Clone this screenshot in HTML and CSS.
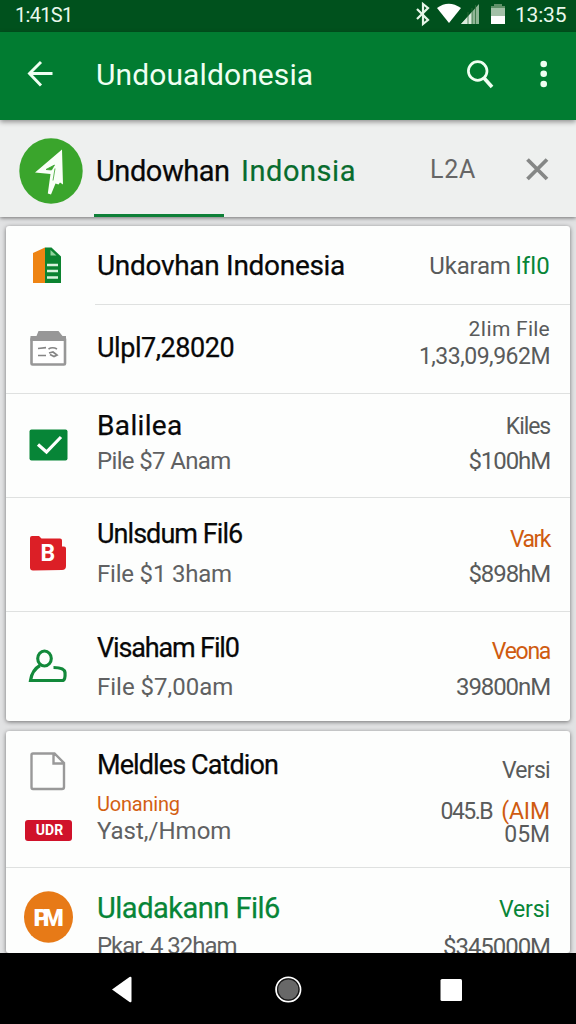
FILE: index.html
```html
<!DOCTYPE html>
<html lang="id">
<head>
<meta charset="utf-8">
<title>Undoualdonesia</title>
<link rel="stylesheet" href="styles.css">
</head>
<body>
<div class="screen">
  <div class="status">
    <span class="status-left">1:41S1</span>
    <svg viewBox="410 0 102 32" width="102" height="32">
      <path d="M417 9l11 11-5 4V4l5 4-11 11" fill="none" stroke="#e6f5e8" stroke-width="2.200"/>
      <path d="M437 8q11.500-8.500 24 0L449 23z" fill="#fff"/>
      <path d="M461 24L479 4V24z" fill="#8fb596"/>
      <path d="M461 24L472 12V24z" fill="#dcebde"/>
      <path d="M468 12v12M472 8v16M475.500 5v19" stroke="#2d6c3a" stroke-width=".8"/>
      <path d="M491 6h3V4h8v2h3v10h-14z" fill="#a3c0a7"/>
      <path d="M491 6h3V4h8v2h3v2h-14z" fill="#5f9068"/>
      <path d="M491 16h14v8h-14z" fill="#fff"/>
    </svg>
    <span class="status-clock">13:35</span>
  </div>
  <div class="appbar">
    <svg viewBox="0 32 96 88" width="96" height="88"><path d="M52.500 73.500H29.500M41 62L29.500 73.500 41 85.500" fill="none" stroke="#effff2" stroke-width="2.900"/></svg>
    <h1 class="appbar-title">Undoualdonesia</h1>
    <svg viewBox="456 32 120 88" width="120" height="88">
      <circle cx="477.700" cy="71" r="9.300" fill="none" stroke="#effff2" stroke-width="2.700"/>
      <path d="M484 78l8 9" stroke="#effff2" stroke-width="3.600"/>
      <g fill="#effff2"><circle cx="543.700" cy="64" r="3.300"/><circle cx="543.700" cy="73.700" r="3.300"/><circle cx="543.700" cy="84" r="3.300"/></g>
    </svg>
  </div>
  <div class="banner">
    <svg viewBox="0 120 94 97" width="94" height="97">
      <ellipse cx="51" cy="171" rx="31.700" ry="32.700" fill="#3aa52c"/>
      <path d="M62 149.500L35 172.500L50.500 174L47.800 193.500L51 194.500L55.500 183.500L58.500 184.500L60 182.500L63 184.500z" fill="#f9fff7"/>
      <path d="M46 169.500l8.500-4.500-3 5zM55 168.500l-2 12" fill="#3aa52c" stroke="#3aa52c" stroke-width=".8"/>
    </svg>
    <div class="banner-tab">Undowhan</div>
    <span class="banner-place">Indonsia</span>
    <span class="banner-code">L2A</span>
    <svg viewBox="520 120 56 97" width="56" height="97"><path d="M527.500 159.500l19.500 19.500M547 159.500L527.500 179" stroke="#858786" stroke-width="3.800"/></svg>
  </div>

  <div class="card">
    <div class="row r1">
      <svg viewBox="6 226 91 78" width="91" height="78">
        <path d="M33 253l12-5.500V283H33z" fill="#ee8413"/><path d="M45 247.500h6.500l9.500 9V283H45z" fill="#0b8330"/>
        <path d="M50.500 250l6 5.500h-6z" fill="#8fd39c"/><path d="M47 265h11M47 271h11M47 277.500h11" stroke="#d9f3dd" stroke-width="2.600"/>
      </svg>
      <div class="main"><span class="title">Undovhan Indonesia</span></div>
      <div class="side"><span class="meta lg">Ukaram<span class="green hl">lfl0</span></span></div>
    </div>
    <div class="row r2">
      <svg viewBox="6 305 91 88" width="91" height="88">
        <rect x="31.500" y="338" width="33.500" height="26.500" rx="1" fill="#fff" stroke="#979797" stroke-width="2.600"/>
        <path d="M30.500 336h6l2-5h20l4 5h3.500v5h-35.500z" fill="#979797"/>
        <path d="M38 348.500l8-.8M38 355.500h8M48.500 349q4-2.500 8.500 0M49 353l4-1 4 3-3 1.500-4-2" fill="none" stroke="#858585" stroke-width="1.700"/>
      </svg>
      <div class="main"><span class="title">Ulpl7,28020</span></div>
      <div class="side"><span class="meta sm">2Iim File</span><span class="meta tight">1,33,09,962M</span></div>
    </div>
    <div class="row r3">
      <svg viewBox="6 394 91 103" width="91" height="103"><rect x="29.500" y="429.500" width="38" height="31" rx="2" fill="#078537"/><path d="M38 444.500l8.500 7.500L61 437" fill="none" stroke="#fff" stroke-width="3.200"/></svg>
      <div class="main"><span class="title">Balilea</span><span class="sub">Pile $7 Anam</span></div>
      <div class="side"><span class="meta">Kiles</span><span class="meta lg">$100hM</span></div>
    </div>
    <div class="row r4">
      <svg viewBox="6 498 91 113" width="91" height="113"><path d="M30 538q0-2 2-2h7l2.500 2.500H60q2 0 2 2v6h2q2 0 2 2V566q0 4-4 4l-29 .5q-3 0-3-3z" fill="#dc1f26"/><text class="icon-b" x="40.500" y="561">B</text></svg>
      <div class="main"><span class="title">Unlsdum Fil6</span><span class="sub">File $1 3ham</span></div>
      <div class="side"><span class="meta orange">Vark</span><span class="meta lg">$898hM</span></div>
    </div>
    <div class="row r5 last">
      <svg viewBox="6 612 91 109" width="91" height="109"><ellipse cx="44.500" cy="658.500" rx="6.800" ry="7.500" fill="none" stroke="#12893a" stroke-width="3.100"/><path d="M40 665.500Q32 670 30.500 680.500H63q2.500-1 2-8-.5-5-11.500-5" fill="none" stroke="#12893a" stroke-width="3.200"/></svg>
      <div class="main"><span class="title">Visaham Fil0</span><span class="sub">File $7,00am</span></div>
      <div class="side"><span class="meta orange">Veona</span><span class="meta lg">39800nM</span></div>
    </div>
  </div>

  <div class="card clipped">
    <div class="row r6">
      <div class="icon-stack">
        <svg viewBox="30 750 38 42" width="38" height="42"><path d="M33 753.500H54.500L64 763v24q0 2-2 2H33q-1.500 0-1.500-2V755q0-1.500 1.500-1.500zM53.500 754v9.500H64" fill="none" stroke="#999" stroke-width="2.400"/></svg>
        <span class="badge">UDR</span>
      </div>
      <div class="main"><span class="title">Meldles Catdion</span><span class="note">Uonaning</span><span class="sub">Yast,/Hmom</span></div>
      <div class="side"><span class="meta">Versi</span><span class="meta tight">045.B<span class="orange hl">(AIM</span></span><span class="meta end">05M</span></div>
    </div>
    <div class="row r7 last">
      <svg viewBox="6 868 91 85" width="91" height="85"><ellipse cx="48.500" cy="917" rx="24.500" ry="25.700" fill="#e77a17"/><text class="icon-m" x="33.500" y="925.500">PM</text></svg>
      <div class="main"><span class="title green">Uladakann Fil6</span><span class="sub">Pkar. 4 32ham</span></div>
      <div class="side"><span class="meta green">Versi</span><span class="meta lg">$345000M</span></div>
    </div>
  </div>

  <div class="nav">
    <svg viewBox="0 953 576 71" width="576" height="71">
      <path d="M112 989.500L129.500 977q2-1 2 1v23q0 2-2 1z" fill="#fff"/>
      <circle cx="288.300" cy="989.500" r="12.200" fill="#686868" stroke="#fff" stroke-width="1.800"/><circle cx="288.300" cy="989.500" r="10.700" fill="none" stroke="#161616" stroke-width="1.200"/>
      <rect x="440.500" y="979" width="21.500" height="22" rx="1.500" fill="#fff"/>
    </svg>
  </div>
</div>
</body>
</html>
```

FILE: styles.css
```css
* { box-sizing: border-box; }
body { margin: 0; font-family: Roboto, "Liberation Sans", sans-serif; background: #e2e3e4; }
svg { display: block; flex: none; }
.screen { display: flex; flex-direction: column; width: 576px; height: 1024px; overflow: hidden; background: #e1e2e3; }

.status { display: flex; flex: none; height: 32px; padding-left: 15px; background: #00511d; color: #e9f8ec; font-size: 21px; line-height: 30px; }
.status-left { width: 395px; font-size: 20px; letter-spacing: -.7px; }
.status-clock { padding-left: 3px; letter-spacing: -.2px; }

.appbar { display: flex; flex: none; height: 88px; background: #017c31; color: #effff2; z-index: 2; box-shadow: 0 2px 5px rgba(0, 0, 0, .4); }
.appbar-title { flex: 1; margin: 0; font-size: 30px; font-weight: 400; line-height: 86px; letter-spacing: .1px; white-space: nowrap; }

.banner { display: flex; flex: none; height: 97px; margin-bottom: 9px; background: #eef0ef; font-size: 29px; line-height: 102px; box-shadow: 0 1px 4px rgba(0, 0, 0, .5); white-space: nowrap; }
.banner-tab { width: 147px; padding-left: 2px; color: #080808; letter-spacing: -.45px; background: linear-gradient(#0d8038, #0d8038) 0 100% / 130px 3px no-repeat; -webkit-text-stroke: .25px; }
.banner-place { width: 189px; color: #086c2e; letter-spacing: .55px; -webkit-text-stroke: .2px; }
.banner-code { flex: 1; font-size: 25px; line-height: 100px; color: #666; letter-spacing: .8px; }

.card { flex: none; width: 564px; margin: 0 0 10px 6px; border-radius: 3px; background: #fdfefd; box-shadow: 0 1px 4px rgba(0, 0, 0, .5); }
.clipped { height: 222px; margin-bottom: 0; overflow: hidden; }
.row { display: flex; padding-right: 20px; border-bottom: 1px solid #dfe1e0; white-space: nowrap; }
.last { border-bottom: 0; }
.main { display: flex; flex: 1; flex-direction: column; align-items: flex-start; }
.side { display: flex; flex-direction: column; align-items: flex-end; }
.title { font-size: 27px; line-height: 32px; color: #080808; -webkit-text-stroke: .25px; }
.sub { font-size: 24px; line-height: 32px; color: #606162; }
.note { margin-top: 10px; font-size: 20px; line-height: 28px; color: #d36012; letter-spacing: -.2px; }
.meta { font-size: 23px; line-height: 32px; color: #595b5b; }
.lg { font-size: 24px; letter-spacing: -1.1px; }
.sm { font-size: 21px; line-height: 28px; }
.tight { line-height: 28px; }
.end { line-height: 20px; }
.title.green, .green { color: #078537; }
.orange { color: #cf5b10; }
.hl { margin-left: 6px; }

.r1 { height: 79px; background: linear-gradient(#dfe1e0, #dfe1e0) 89px 100% / 475px 1px no-repeat; border-bottom: 0; }
.r1 .main { padding-top: 24px; }
.r1 .side { padding-top: 24px; }
.r1 .title { font-size: 28px; letter-spacing: -.3px; }
.r1 .lg { letter-spacing: -.2px; }
.r1 .hl { margin-left: 5px; letter-spacing: .2px; }

.r2 { height: 89px; }
.r2 .main { padding-top: 27px; }
.r2 .side { padding-top: 10px; }
.r2 .title { letter-spacing: -.45px; }
.r2 .sm { letter-spacing: .25px; }
.r2 .tight { letter-spacing: -.5px; }

.r3 { height: 104px; }
.r3 .main { padding-top: 16px; gap: 3px; }
.r3 .side { padding-top: 17px; gap: 2px; }
.r3 .title { font-size: 28px; letter-spacing: .35px; }
.r3 .sub { letter-spacing: -.65px; }
.r3 .side .meta:first-child { letter-spacing: -1.1px; }

.r4 { height: 114px; }
.r4 .main { padding-top: 20px; gap: 8px; }
.r4 .side { padding-top: 26px; gap: 2px; }
.r4 .title { letter-spacing: -.95px; }
.r4 .sub { letter-spacing: -.2px; }
.r4 .orange { letter-spacing: -1.5px; }

.r5 { height: 109px; }
.r5 .main { padding-top: 20px; gap: 7px; }
.r5 .side { padding-top: 24px; gap: 3px; }
.r5 .title { letter-spacing: -1.15px; }
.r5 .orange { letter-spacing: -1.3px; }

.r6 { height: 137px; }
.r6 .main { padding-top: 18px; }
.r6 .note { margin-top: 9px; }
.r6 .title { letter-spacing: -.9px; }
.r6 .sub { line-height: 28px; margin-top: -1px; }
.r6 .side { padding-top: 24px; }
.r6 .side .meta:first-child { letter-spacing: -.7px; }
.r6 .tight { margin-top: 11px; line-height: 27px; letter-spacing: -1.5px; }
.r6 .hl { margin-left: 9px; letter-spacing: -.1px; }
.r6 .end { letter-spacing: -.1px; }

.r7 .main { padding-top: 24px; gap: 6px; }
.r7 .side { padding-top: 26px; gap: 5px; }
.r7 .title { font-size: 29px; letter-spacing: -.5px; }
.r7 .sub { letter-spacing: -1.05px; }
.r7 .green { letter-spacing: -.1px; }
.r7 .title.green { letter-spacing: -.5px; }
.r7 .lg { letter-spacing: -1.05px; }

.icon-stack { display: flex; flex-direction: column; align-items: center; gap: 28px; width: 85px; margin-right: 6px; padding-top: 19px; }
.badge { width: 47px; height: 21px; padding-left: 2px; border-radius: 3px; background: #d0122a; color: #fff; font-size: 14px; font-weight: 700; line-height: 21px; text-align: center; }
.icon-b { font: 700 23px Roboto, sans-serif; fill: #fff; }
.icon-m { font: 900 24px Roboto, sans-serif; letter-spacing: -6.5px; fill: #fff; }
.nav { flex: none; height: 71px; background: #000; }
```
